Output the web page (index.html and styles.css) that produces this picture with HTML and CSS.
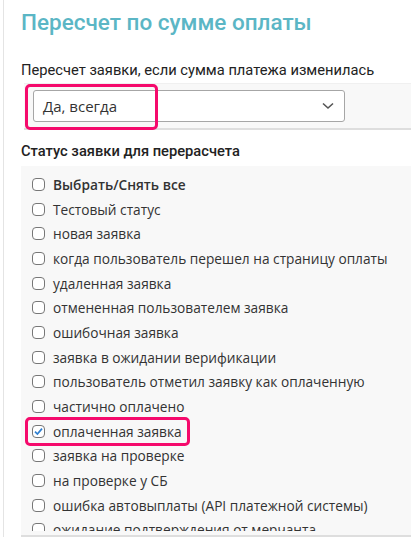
FILE: index.html
```html
<!DOCTYPE html>
<html lang="ru">
<head>
<meta charset="utf-8">
<link rel="stylesheet" href="styles.css">
</head>
<body>
<div class="panel">
  <h1 class="title">Пересчет по сумме оплаты</h1>
  <div class="field-label">Пересчет заявки, если сумма платежа изменилась</div>
  <div class="select-band">
    <div class="select">
      <span class="select-value">Да, всегда</span>
      <svg class="chevron" width="12" height="8" viewBox="0 0 12 8"><path d="M1 1.5 L6 6 L11 1.5" fill="none" stroke="#555" stroke-width="1.6"/></svg>
    </div>
    <div class="mark mark-select"></div>
  </div>
  <div class="field-label status-label">Статус заявки для перерасчета</div>
  <div class="list-band">
    <ul class="list">
      <li class="item all"><span class="cb"></span>Выбрать/Снять все</li>
      <li class="item"><span class="cb"></span>Тестовый статус</li>
      <li class="item"><span class="cb"></span>новая заявка</li>
      <li class="item"><span class="cb"></span>когда пользователь перешел на страницу оплаты</li>
      <li class="item"><span class="cb"></span>удаленная заявка</li>
      <li class="item"><span class="cb"></span>отмененная пользователем заявка</li>
      <li class="item"><span class="cb"></span>ошибочная заявка</li>
      <li class="item"><span class="cb"></span>заявка в ожидании верификации</li>
      <li class="item"><span class="cb"></span>пользователь отметил заявку как оплаченную</li>
      <li class="item"><span class="cb"></span>частично оплачено</li>
      <li class="item checked"><span class="cb"><svg width="11" height="11" viewBox="0 0 11 11"><path d="M2 5.6 L4.4 8 L9 2.6" fill="none" stroke="#2f7fd0" stroke-width="1.7"/></svg></span>оплаченная заявка<div class="mark mark-item"></div></li>
      <li class="item"><span class="cb"></span>заявка на проверке</li>
      <li class="item"><span class="cb"></span>на проверке у СБ</li>
      <li class="item"><span class="cb"></span>ошибка автовыплаты (API платежной системы)</li>
      <li class="item"><span class="cb"></span>ожидание подтверждения от мерчанта</li>
    </ul>
  </div>
</div>
</body>
</html>
```
FILE: styles.css
```css
* { box-sizing: border-box; }
html, body { margin: 0; padding: 0; background: #fff; }
body { font-family: Roboto, "Open Sans", sans-serif; color: #222; }

.panel {
  margin-left: 3px;
  border-left: 1px solid #e4e4e4;
  padding-top: 8px;
  height: 537px;
}

.title {
  margin: 0 0 0 17px;
  font-family: Roboto, sans-serif;
  font-weight: 500;
  font-size: 22.5px;
  line-height: 28px;
  color: #5bb6c5;
}

.field-label {
  margin: 24px 0 0 17px;
  font-size: 14.7px;
  line-height: 20px;
  color: #222;
}

.select-band {
  position: relative;
  margin: 3px 0 0 20px;
  padding: 6px 0 6px 9px;
  background: #f8f8f8;
  border-top: 1px solid #f0f0f0;
  border-bottom: 2px solid #dedede;
}

.select {
  width: 312px;
  height: 32px;
  border: 1px solid #a6a6a6;
  border-radius: 3px;
  background: #fff;
  display: flex;
  align-items: center;
  justify-content: space-between;
  padding: 0 10px 0 9px;
}

.select-value {
  font-family: "Open Sans", sans-serif;
  font-size: 15px;
  color: #333;
}

.mark {
  position: absolute;
  border: 3px solid #f50a6c;
  border-radius: 5px;
  pointer-events: none;
}
.mark-select { left: 1px; top: 0; width: 133px; height: 46px; }

.status-label { margin-top: 11px; font-weight: 500; }

.list-band {
  margin: 5px 0 0 17px;
  height: 371px;
  padding-bottom: 4px;
  background: #f8f8f8;
  border-bottom: 2px solid #dedede;
  overflow: hidden;
}

.list {
  list-style: none;
  margin: 0;
  padding: 6px 0 0 11px;
  height: 365px;
  overflow: hidden;
}

.item {
  position: relative;
  display: flex;
  align-items: center;
  height: 24.7px;
  font-family: "Open Sans", sans-serif;
  font-size: 13.7px;
  color: #333;
  white-space: nowrap;
}
.item.all { font-weight: 600; color: #333; }

.cb {
  width: 13px;
  height: 13px;
  border: 1px solid #777;
  border-radius: 4px;
  background: #fff;
  margin-right: 8px;
  flex: none;
  display: flex;
  align-items: center;
  justify-content: center;
}

.mark-item { left: -7px; top: -2px; width: 165px; height: 29px; }
```
